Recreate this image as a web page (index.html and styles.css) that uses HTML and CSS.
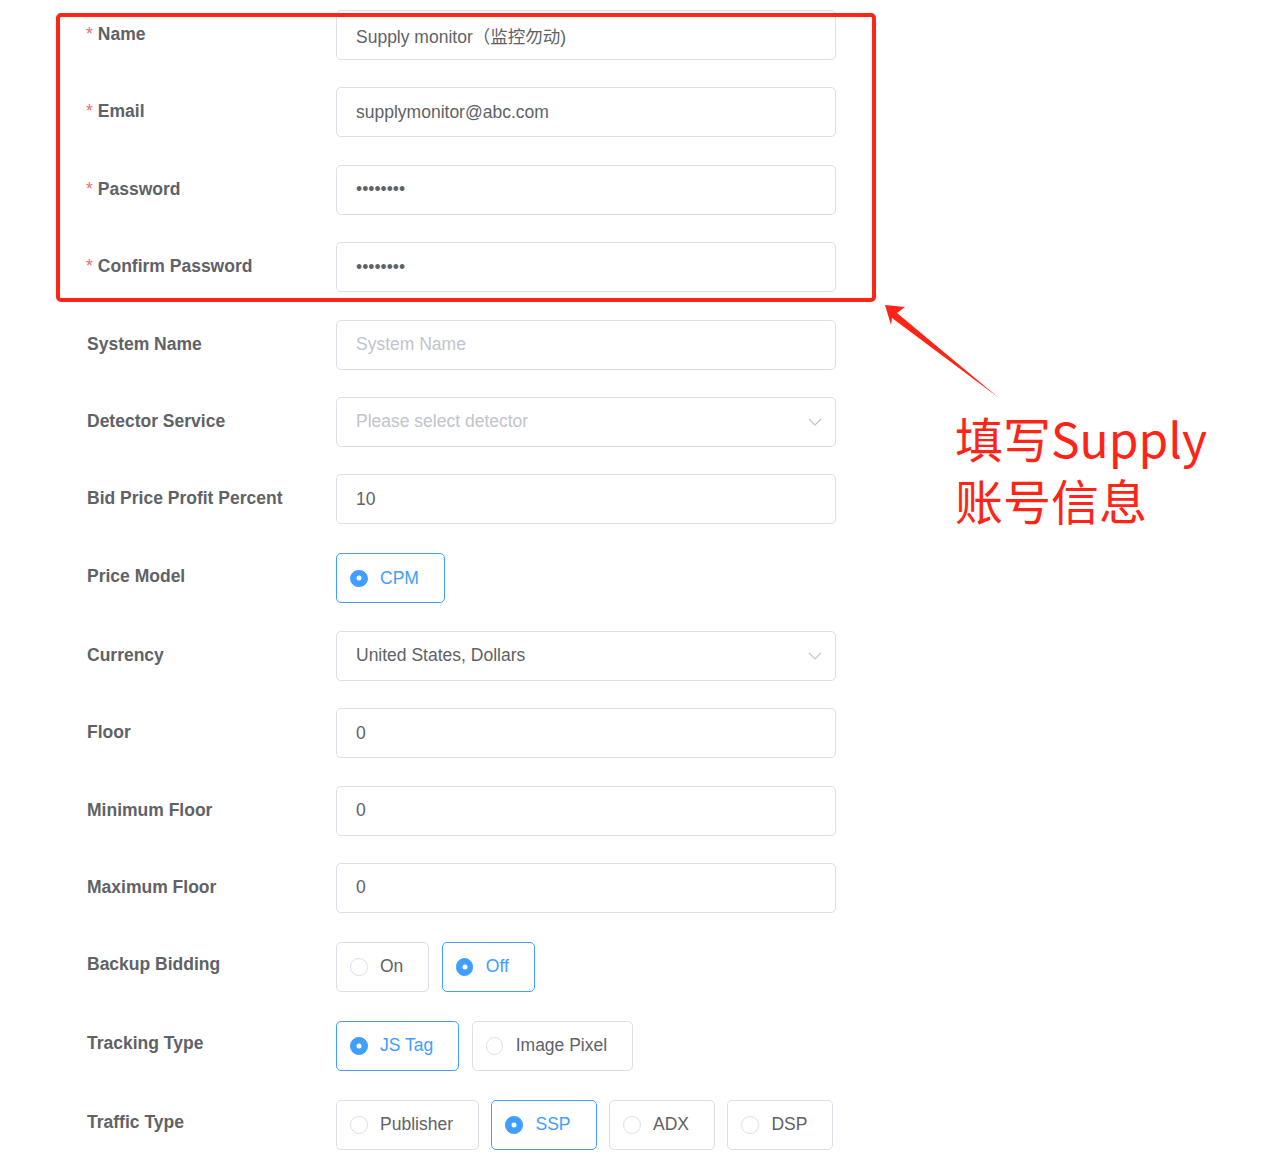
FILE: index.html
```html
<!DOCTYPE html>
<html lang="en">
<head>
<meta charset="utf-8">
<title>Supply form</title>
<link rel="stylesheet" href="styles.css">
</head>
<body>
<div class="page">
  <form class="form">
    <div class="row">
      <label class="label"><span class="req">*</span>Name</label>
      <div class="field"><input class="input" type="text" value="Supply monitor（监控勿动)"></div>
    </div>
    <div class="row">
      <label class="label"><span class="req">*</span>Email</label>
      <div class="field"><input class="input" type="text" value="supplymonitor@abc.com"></div>
    </div>
    <div class="row">
      <label class="label"><span class="req">*</span>Password</label>
      <div class="field"><input class="input" type="password" value="12345678"></div>
    </div>
    <div class="row">
      <label class="label"><span class="req">*</span>Confirm Password</label>
      <div class="field"><input class="input" type="password" value="12345678"></div>
    </div>
    <div class="row">
      <label class="label">System Name</label>
      <div class="field"><input class="input" type="text" placeholder="System Name"></div>
    </div>
    <div class="row">
      <label class="label">Detector Service</label>
      <div class="field select">
        <input class="input" type="text" placeholder="Please select detector" readonly>
        <svg class="chev" viewBox="0 0 14 8" width="14" height="8"><path d="M1 1 L7 7 L13 1" fill="none" stroke="#c0c4cc" stroke-width="1.2"/></svg>
      </div>
    </div>
    <div class="row">
      <label class="label">Bid Price Profit Percent</label>
      <div class="field"><input class="input" type="text" value="10"></div>
    </div>
    <div class="row radio-row">
      <label class="label">Price Model</label>
      <div class="field radios">
        <span class="radio on"><span class="dot"></span>CPM</span>
      </div>
    </div>
    <div class="row">
      <label class="label">Currency</label>
      <div class="field select">
        <input class="input" type="text" value="United States, Dollars" readonly>
        <svg class="chev" viewBox="0 0 14 8" width="14" height="8"><path d="M1 1 L7 7 L13 1" fill="none" stroke="#c0c4cc" stroke-width="1.2"/></svg>
      </div>
    </div>
    <div class="row">
      <label class="label">Floor</label>
      <div class="field"><input class="input" type="text" value="0"></div>
    </div>
    <div class="row">
      <label class="label">Minimum Floor</label>
      <div class="field"><input class="input" type="text" value="0"></div>
    </div>
    <div class="row">
      <label class="label">Maximum Floor</label>
      <div class="field"><input class="input" type="text" value="0"></div>
    </div>
    <div class="row radio-row">
      <label class="label">Backup Bidding</label>
      <div class="field radios">
        <span class="radio"><span class="dot"></span>On</span>
        <span class="radio on"><span class="dot"></span>Off</span>
      </div>
    </div>
    <div class="row radio-row">
      <label class="label">Tracking Type</label>
      <div class="field radios">
        <span class="radio on"><span class="dot"></span>JS Tag</span>
        <span class="radio"><span class="dot"></span>Image Pixel</span>
      </div>
    </div>
    <div class="row radio-row">
      <label class="label">Traffic Type</label>
      <div class="field radios">
        <span class="radio"><span class="dot"></span>Publisher</span>
        <span class="radio on"><span class="dot"></span>SSP</span>
        <span class="radio"><span class="dot"></span>ADX</span>
        <span class="radio"><span class="dot"></span>DSP</span>
      </div>
    </div>
  </form>

  <svg class="annot" width="1268" height="1171" viewBox="0 0 1268 1171">
    <rect x="58" y="15" width="816" height="285" rx="3" ry="3" fill="none" stroke="#ff2418" stroke-width="4"/>
    <polygon points="885,305 905,307 897,313 999,398 892,318 891,325" fill="#ff2418"/>
  </svg>
  <div class="note"><span class="note-line">填写Supply</span><span class="note-line">账号信息</span></div>
</div>
</body>
</html>
```
FILE: styles.css
```css
html, body {
  margin: 0;
  padding: 0;
  background: #ffffff;
}
.page {
  position: relative;
  width: 1268px;
  height: 1171px;
  overflow: hidden;
  font-family: "Liberation Sans", Arial, "Noto Sans CJK SC", sans-serif;
}
.form {
  display: flex;
  flex-direction: column;
  gap: 27.4px;
  padding: 10px 0 0 87px;
}
.row {
  display: flex;
  align-items: flex-start;
  height: 50px;
}
.radio-row {
  height: 51.6px;
}
.label {
  width: 249px;
  font-size: 17.5px;
  font-weight: bold;
  color: #606266;
  line-height: 49px;
  white-space: nowrap;
}
.req {
  color: #f56c6c;
  font-weight: normal;
  margin-left: -1px;
  margin-right: 5px;
}
.field {
  width: 500px;
  height: 50px;
  position: relative;
}
.radio-row .field {
  align-self: flex-end;
}
.input {
  box-sizing: border-box;
  display: block;
  width: 500px;
  height: 50px;
  margin: 0;
  border: 1px solid #dcdfe6;
  border-radius: 5px;
  padding: 0 19px;
  font-family: "Liberation Sans", Arial, "Noto Sans CJK SC", sans-serif;
  font-size: 17.5px;
  color: #606266;
  background: #fff;
  outline: none;
}
.input::placeholder {
  color: #c0c4cc;
}
.select .input {
  padding-right: 40px;
}
.chev {
  position: absolute;
  right: 14px;
  top: 21px;
}
.radios {
  display: flex;
  gap: 12.5px;
}
.radio {
  box-sizing: border-box;
  height: 50px;
  display: inline-flex;
  align-items: center;
  padding: 0 25px 0 13px;
  border: 1px solid #dcdfe6;
  border-radius: 5px;
  font-size: 17.5px;
  color: #606266;
  white-space: nowrap;
}
.dot {
  box-sizing: border-box;
  width: 17.5px;
  height: 17.5px;
  border: 1px solid #dcdfe6;
  border-radius: 50%;
  margin-right: 12.5px;
  position: relative;
  flex: none;
}
.radio.on {
  border-color: #409eff;
  color: #409eff;
}
.radio.on .dot {
  background: #409eff;
  border-color: #409eff;
}
.radio.on .dot::after {
  content: "";
  position: absolute;
  width: 5px;
  height: 5px;
  border-radius: 50%;
  background: #fff;
  left: 50%;
  top: 50%;
  transform: translate(-50%, -50%);
}
.annot {
  position: absolute;
  left: 0;
  top: 0;
  pointer-events: none;
}
.note {
  position: absolute;
  left: 955px;
  top: 406px;
  display: flex;
  flex-direction: column;
  font-family: "Noto Sans CJK SC", "Noto Sans", sans-serif;
  font-size: 48px;
  color: #ff2418;
  white-space: nowrap;
}
.note-line {
  display: block;
  height: 62px;
  line-height: 62px;
}
```
